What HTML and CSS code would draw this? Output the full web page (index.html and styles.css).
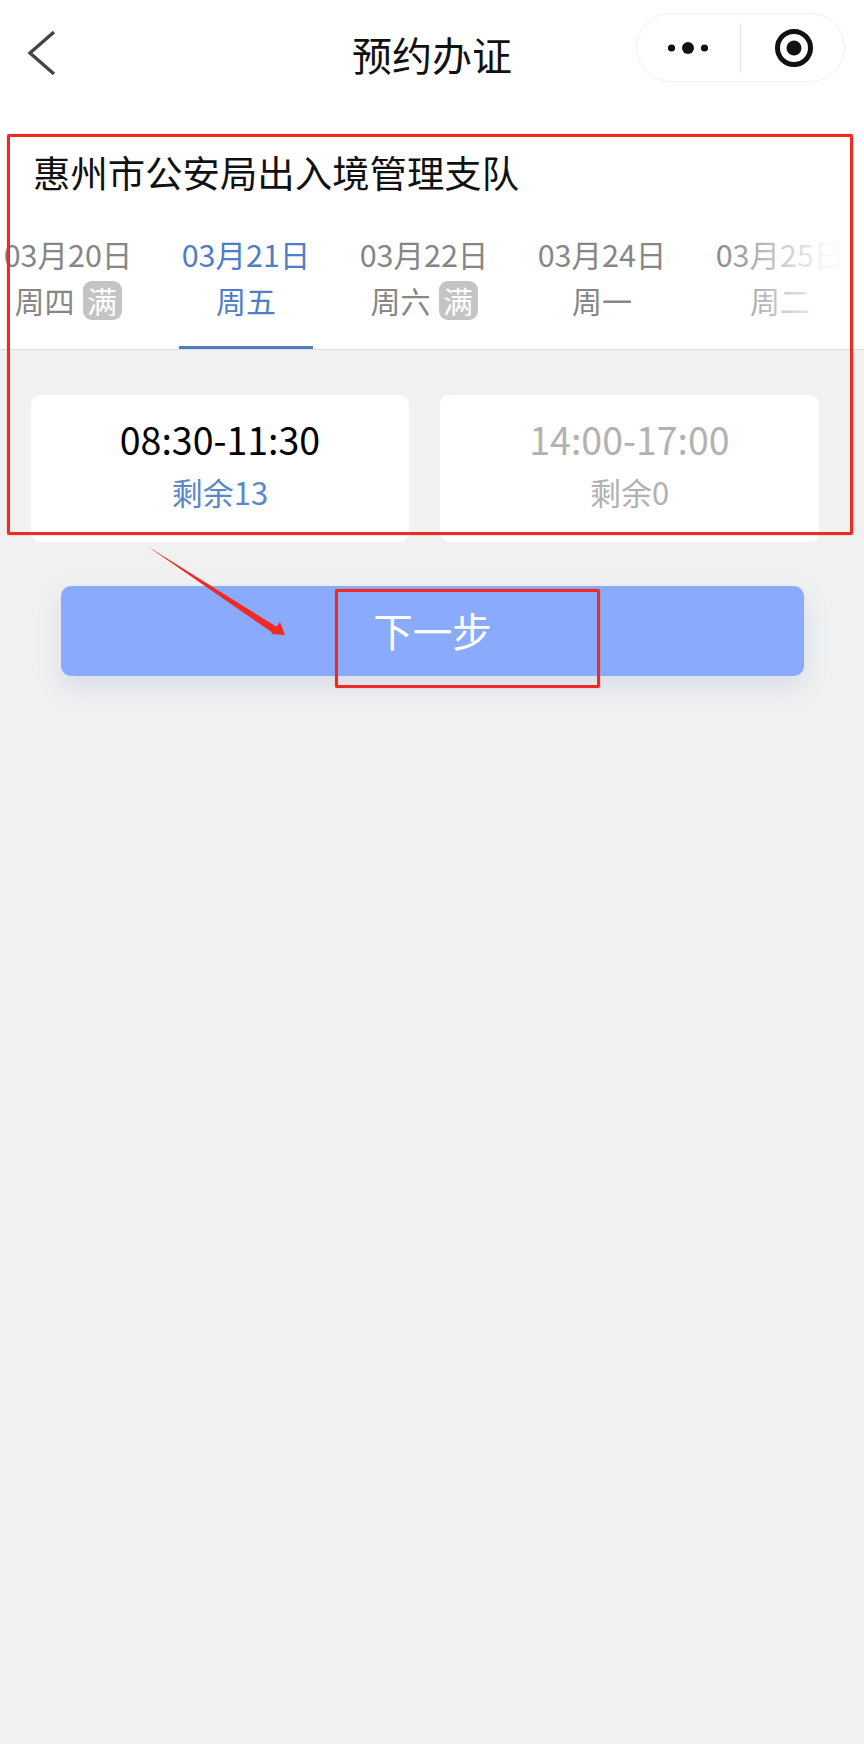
FILE: index.html
```html
<!DOCTYPE html>
<html lang="zh-CN">

<head>
  <meta charset="UTF-8">
  <meta name="viewport" content="width=device-width, initial-scale=1.0">
  <title>预约办证</title>
  <link rel="stylesheet" href="styles.css">
</head>

<body>
  <div class="page">
    <div class="top">
      <div class="nav">
        <svg class="nav_back" width="30" height="46" viewBox="0 0 30 46">
          <path d="M27 2 L3 23 L27 44" fill="none" stroke="#444" stroke-width="3.4" />
        </svg>
        <span class="nav_title">预约办证</span>
        <div class="capsule">
          <svg class="capsule_more" width="44" height="14" viewBox="0 0 44 14">
            <circle cx="5.5" cy="7" r="3.6" fill="#111" />
            <circle cx="22" cy="7" r="6" fill="#111" />
            <circle cx="38.5" cy="7" r="3.6" fill="#111" />
          </svg>
          <span class="capsule_line"></span>
          <svg class="capsule_target" width="40" height="40" viewBox="0 0 40 40">
            <circle cx="20" cy="20" r="16.5" fill="none" stroke="#111" stroke-width="5" />
            <circle cx="20" cy="20" r="7.5" fill="#111" />
          </svg>
        </div>
      </div>

      <h1 class="office">惠州市公安局出入境管理支队</h1>

      <div class="tabs">
        <div class="tab_list">
          <div class="tab">
            <div class="tab_date">03月20日</div>
            <div class="tab_week">周四<span class="full">满</span></div>
          </div>
          <div class="tab active">
            <div class="tab_date">03月21日</div>
            <div class="tab_week">周五</div>
          </div>
          <div class="tab">
            <div class="tab_date">03月22日</div>
            <div class="tab_week">周六<span class="full">满</span></div>
          </div>
          <div class="tab">
            <div class="tab_date">03月24日</div>
            <div class="tab_week">周一</div>
          </div>
          <div class="tab">
            <div class="tab_date">03月25日</div>
            <div class="tab_week">周二</div>
          </div>
        </div>
        <div class="tabs_fade"></div>
      </div>
    </div>

    <div class="slots">
      <div class="slot">
        <div class="slot_time">08:30-11:30</div>
        <div class="slot_left">剩余13</div>
      </div>
      <div class="slot off">
        <div class="slot_time">14:00-17:00</div>
        <div class="slot_left">剩余0</div>
      </div>
    </div>

    <div class="btn_box">
      <button class="nextBtn" type="button">下一步</button>
    </div>

    <!-- 截图上的红色标注 -->
    <div class="mark mark_top"></div>
    <div class="mark mark_btn"></div>
    <svg class="mark_arrow" width="150" height="100" viewBox="0 0 150 100">
      <polygon points="1,1 131,82 127,88" fill="#f02a22" />
      <polygon points="139,90 125,89 134,77" fill="#f02a22" />
    </svg>
  </div>
</body>

</html>
```

FILE: styles.css
```css
/* 기본 스타일 */
body {
  margin: 0;
  padding: 0;
  background-color: #f1f1f1;
  font-family: "Noto Sans CJK SC", "Noto Sans", sans-serif;
}

.page {
  position: relative;
  min-height: 1744px;
  overflow: hidden;
}

.top {
  background-color: #fff;
  border-bottom: 1px solid #dddddd;
}

/* 상단 */
.nav {
  display: flex;
  align-items: center;
  justify-content: center;
  position: relative;
  height: 108px;
}

.nav_title {
  font-size: 40px;
  line-height: 50px;
  color: #111;
}

.nav_back {
  position: absolute;
  left: 27px;
  top: 30px;
}

.capsule {
  position: absolute;
  left: 636px;
  top: 13px;
  width: 209px;
  height: 69px;
  box-sizing: border-box;
  border: 1px solid #f0f0f0;
  border-radius: 35px;
  display: flex;
  align-items: center;
}

.capsule_more {
  margin-left: 29px;
  margin-right: 30px;
}

.capsule_line {
  width: 1px;
  height: 50px;
  background-color: #e6e6e6;
}

.capsule_target {
  margin-left: 33px;
}

.office {
  margin: 0;
  padding: 39px 0 0 33px;
  font-size: 37.4px;
  line-height: 50px;
  font-weight: 400;
  color: #111;
}

/* 날짜 탭 */
.tabs {
  position: relative;
  overflow: hidden;
  margin-top: 34px;
}

.tab_list {
  display: flex;
  margin-left: -21px;
}

.tab {
  flex: 0 0 178px;
  height: 118px;
  box-sizing: border-box;
  text-align: center;
  color: #868686;
  position: relative;
}

.tab_date {
  font-size: 30.5px;
  line-height: 46px;
}

.tab_week {
  display: flex;
  align-items: center;
  justify-content: center;
  height: 46px;
  font-size: 30px;
}

.full {
  width: 39px;
  height: 39px;
  margin-left: 8px;
  border-radius: 9px;
  background-color: #c4c4c4;
  color: #fff;
  font-size: 30px;
  line-height: 39px;
}

.tab.active {
  color: #4f7ec6;
}

.tab.active::after {
  content: "";
  position: absolute;
  left: 22px;
  right: 22px;
  bottom: 0;
  height: 3px;
  background-color: #4f7ec6;
}

.tabs_fade {
  position: absolute;
  top: 0;
  right: 0;
  bottom: 0;
  width: 150px;
  background: linear-gradient(to right, rgba(255, 255, 255, 0), rgba(255, 255, 255, 0.95) 75%, #fff);
}

/* 시간 카드 */
.slots {
  display: grid;
  grid-template-columns: 378px 379px;
  gap: 31px;
  padding: 45px 0 0 31px;
}

.slot {
  height: 147px;
  box-sizing: border-box;
  padding-top: 19px;
  background-color: #fff;
  border-radius: 9px;
  text-align: center;
}

.slot_time {
  font-size: 37.5px;
  line-height: 50px;
  color: #000;
}

.slot_left {
  margin-top: 5px;
  font-size: 31px;
  line-height: 46px;
  color: #5b87c9;
}

.slot.off .slot_time,
.slot.off .slot_left {
  color: #b2b2b2;
}

/* 버튼 */
.btn_box {
  padding: 44px 60px 0 61px;
}

.nextBtn {
  display: block;
  width: 100%;
  height: 90px;
  padding: 0 0 4px;
  border: none;
  border-radius: 10px;
  background-color: #8aabfb;
  box-shadow: 0 10px 24px rgba(110, 135, 200, 0.2);
  color: #fff;
  font-family: inherit;
  font-size: 39.5px;
}

/* 빨간 표시 */
.mark {
  position: absolute;
  box-sizing: border-box;
  border: 3px solid #f02a22;
  border-radius: 2px;
  box-shadow: 0 0 1px #f02a22;
}

.mark_top {
  left: 7px;
  top: 134px;
  width: 846px;
  height: 401px;
}

.mark_btn {
  left: 335px;
  top: 589px;
  width: 265px;
  height: 99px;
}

.mark_arrow {
  position: absolute;
  left: 146px;
  top: 545px;
}
```
